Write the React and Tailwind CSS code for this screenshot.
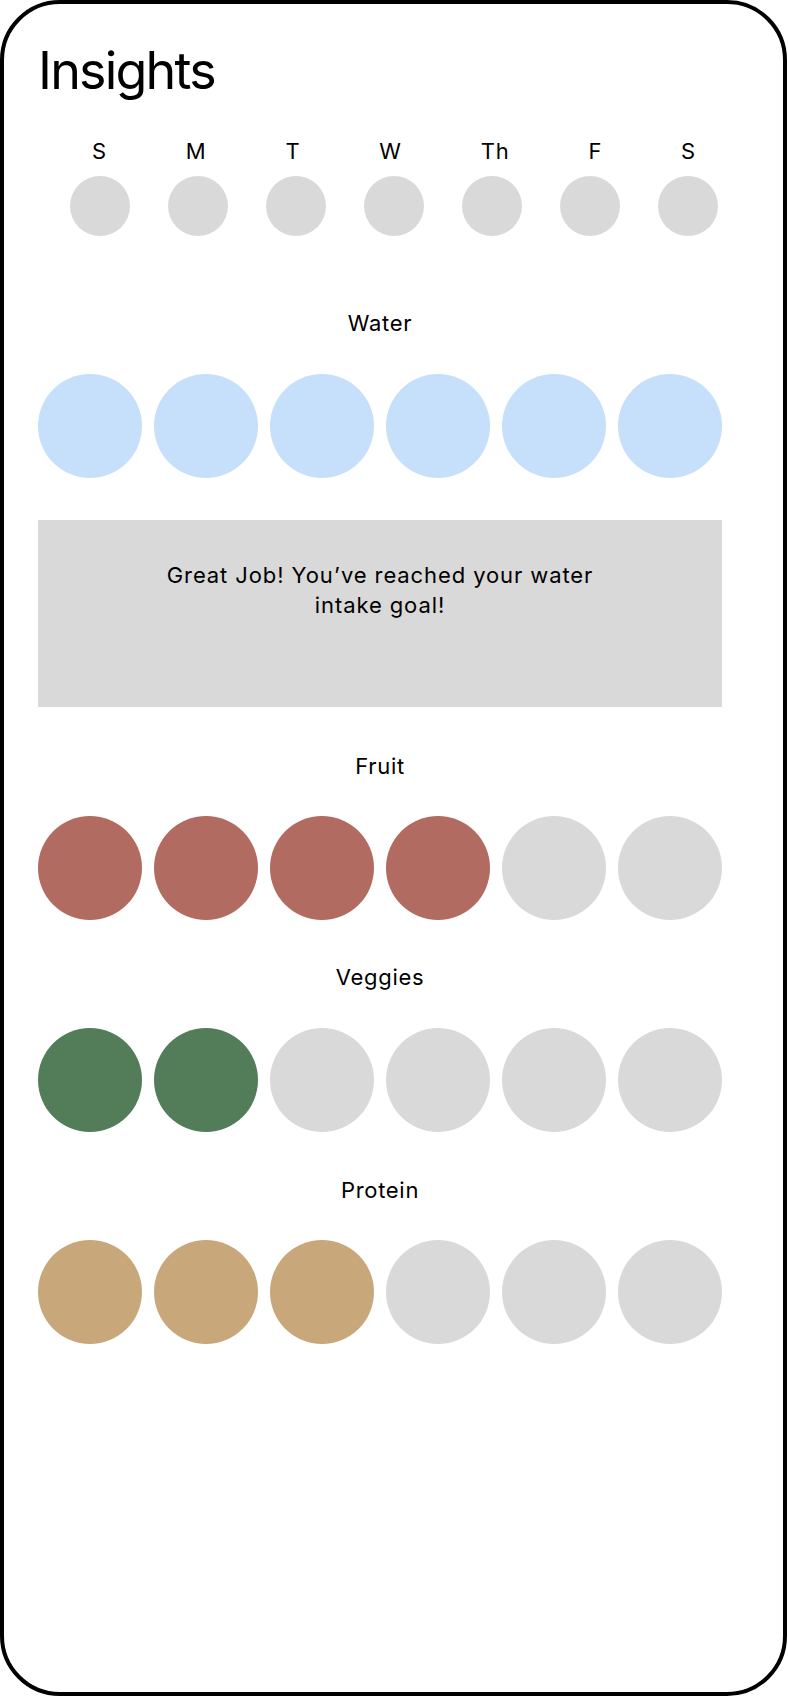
import React from "react";

const DAYS = ["S", "M", "T", "W", "Th", "F", "S"];

const GOALS = [
  { label: "Water", filled: 6, color: "bg-[#c6dffb]" },
  { label: "Fruit", filled: 4, color: "bg-[#b16b61]" },
  { label: "Veggies", filled: 2, color: "bg-[#537c58]" },
  { label: "Protein", filled: 3, color: "bg-[#c8a77a]" },
];

function DotRow({ filled, color }) {
  return (
    <div className="flex gap-3">
      {Array.from({ length: 6 }).map((_, i) => (
        <div
          key={i}
          className={`w-[104px] h-[104px] rounded-full ${i < filled ? color : "bg-[#d9d9d9]"}`}
        />
      ))}
    </div>
  );
}

function Label({ children, className = "" }) {
  return (
    <div className={`text-center text-[22px] leading-none tracking-[0.7px] ${className}`}>
      {children}
    </div>
  );
}

export default function App() {
  const [water, fruit, veggies, protein] = GOALS;

  return (
    <div className="w-[787px] h-[1696px] bg-white border-4 border-black rounded-[60px] text-black font-['Inter',sans-serif]">
      <div className="w-[684px] ml-[34px] pt-[41px]">
        <h1 className="text-[52px] leading-none font-normal tracking-[-1.8px]">Insights</h1>

        {/* week */}
        <div className="mt-[43px] flex justify-between pl-[54px] pr-[26px]">
          {DAYS.map((d, i) => (
            <span key={i} className="text-[22px] leading-none tracking-[0.7px]">{d}</span>
          ))}
        </div>
        <div className="mt-[14px] flex gap-[38px] pl-[32px]">
          {DAYS.map((_, i) => (
            <div key={i} className="w-[60px] h-[60px] rounded-full bg-[#d9d9d9]" />
          ))}
        </div>

        <Label className="mt-[76px]">{water.label}</Label>
        <div className="mt-[40px]">
          <DotRow {...water} />
        </div>

        <div className="mt-[42px] h-[187px] bg-[#d9d9d9] pt-[40px]">
          <p className="max-w-[460px] mx-auto text-center text-[22px] leading-[30px] tracking-[0.9px]">
            Great Job! You’ve reached your water intake goal!
          </p>
        </div>

        <Label className="mt-[48px]">{fruit.label}</Label>
        <div className="mt-[39px]">
          <DotRow {...fruit} />
        </div>

        <Label className="mt-[46px]">{veggies.label}</Label>
        <div className="mt-[40px]">
          <DotRow {...veggies} />
        </div>

        <Label className="mt-[47px]">{protein.label}</Label>
        <div className="mt-[39px]">
          <DotRow {...protein} />
        </div>
      </div>
    </div>
  );
}
